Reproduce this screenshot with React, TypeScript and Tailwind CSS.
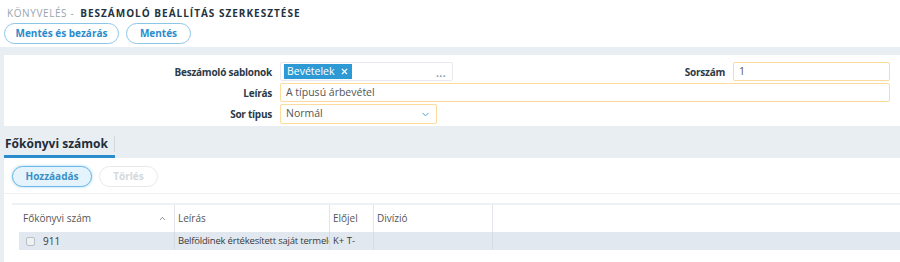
import { ChevronDown, ChevronUp, X } from "lucide-react";

const labelCls = "text-right text-[10px] font-bold tracking-[-0.25px] text-[#2b3a47] leading-none";
const inputCls = "h-[19px] border border-[#fbdc9c] bg-white rounded-[2px] px-[5px] flex items-center text-[10.5px] text-[#555]";

function Label({ children, w = "w-[268px]" }: { children: string; w?: string }) {
  return <div className={`${w} ${labelCls}`}>{children}</div>;
}

export default function App() {
  return (
    <div className="w-[900px] h-[262px] overflow-hidden bg-[#e9eef2] font-['Open_Sans',sans-serif]">
      <header className="h-[47px] bg-white px-[4px] pt-[7px]">
        <div className="flex items-center text-[10px] uppercase leading-none h-[12px]">
          <span className="text-[#9aa4ad] pl-[3px] tracking-[0.6px]">Könyvelés -</span>
          <span className="ml-[6px] font-bold text-[#24323e] tracking-[1px]">Beszámoló beállítás szerkesztése</span>
        </div>
        <div className="mt-[4px] flex gap-[7px]">
          <button className="h-[21px] w-[115px] rounded-full border border-[#8cc6e7] text-[10px] font-bold text-[#2a8ccc]">
            Mentés és bezárás
          </button>
          <button className="h-[21px] w-[65px] rounded-full border border-[#8cc6e7] text-[10px] font-bold text-[#2a8ccc]">
            Mentés
          </button>
        </div>
      </header>

      <section className="ml-[4px] mt-[8px] h-[71px] bg-white pt-[7px] pr-[10px] flex flex-col gap-[2px]">
        <div className="flex items-center h-[19px]">
          <Label>Beszámoló sablonok</Label>
          <div className="ml-[8px] w-[173px] h-[19px] border border-[#e6eaee] rounded-[2px] flex items-center px-[3px] relative">
            <span className="h-[15px] bg-[#2d9ad6] text-white text-[10.5px] flex items-center px-[3px] gap-[5px] leading-none">
              Bevételek
              <X size={9} strokeWidth={3} />
            </span>
            <span className="absolute right-[6px] bottom-[2px] text-[10px] font-bold text-[#8a97a3] leading-none tracking-[0.5px]">...</span>
          </div>
          <div className="flex-1" />
          <Label w="">Sorszám</Label>
          <div className={`${inputCls} ml-[8px] w-[157px]`}>1</div>
        </div>
        <div className="flex items-center h-[19px]">
          <Label>Leírás</Label>
          <div className={`${inputCls} ml-[8px] flex-1`}>A típusú árbevétel</div>
        </div>
        <div className="flex items-center h-[20px]">
          <Label>Sor típus</Label>
          <div className={`${inputCls} h-[20px] ml-[8px] w-[157px] justify-between`}>
            Normál
            <ChevronDown size={11} className="text-[#3d9ad6]" />
          </div>
        </div>
      </section>

      <div className="ml-[4px] mt-[6px] h-[26px] flex items-end">
        <div className="relative h-[26px] w-[111px] border-b-[3px] border-[#2a8ccc] flex items-center pl-[1px]">
          <span className="text-[12px] font-bold text-[#1e2d3a] leading-none">Főkönyvi számok</span>
          <span className="absolute right-0 top-[4px] h-[16px] w-px bg-[#d3dae0]" />
        </div>
      </div>

      <section className="ml-[4px] h-[110px] bg-white pt-[8px]">
        <div className="pl-[8px] flex gap-[7px] pb-[6px] border-b border-[#eef1f4]">
          <button className="h-[21px] w-[80px] rounded-full border border-[#6ab8e6] bg-[#e4f3fc] shadow-[0_0_3px_#9fd3f2] text-[10px] font-bold text-[#3a8fc7]">
            Hozzáadás
          </button>
          <button className="h-[21px] w-[59px] rounded-full border border-[#e6e9ec] text-[10px] font-bold text-[#d3d8dc]">
            Törlés
          </button>
        </div>
        <div className="ml-[8px] mt-[9px] border-t-[2px] border-[#edf1f4] pl-[7px]">
          <div className="flex h-[27px] text-[10px] text-[#555]">
            <div className="w-[156px] flex items-center justify-between pl-[4px] pr-[7px] border-r border-[#e2e6ea]">
              Főkönyvi szám
              <ChevronUp size={9} className="text-[#666]" />
            </div>
            <div className="w-[155px] flex items-center pl-[3px] border-r border-[#e2e6ea]">Leírás</div>
            <div className="w-[44px] flex items-center pl-[3px] border-r border-[#e2e6ea]">Előjel</div>
            <div className="w-[119px] flex items-center pl-[3px] border-r border-[#e2e6ea]">Divízió</div>
            <div className="flex-1" />
          </div>
          <div className="flex h-[18px] bg-[#e1e8f0] text-[9.5px] text-[#3a3a3a]">
            <div className="w-[156px] flex items-center pl-[7px] gap-[8px] border-r border-[#d5dce3]">
              <span className="w-[9px] h-[9px] rounded-[2px] border border-[#b9bfc5] bg-[#eef0f2]" />
              <span className="text-[10px]">911</span>
            </div>
            <div className="w-[155px] pl-[3px] border-r border-[#d5dce3] overflow-hidden whitespace-nowrap leading-[18px] tracking-[-0.2px]">
              Belföldinek értékesített saját termelé
            </div>
            <div className="w-[44px] flex items-center pl-[3px] border-r border-[#d5dce3]">K+ T-</div>
            <div className="w-[119px] border-r border-[#d5dce3]" />
            <div className="flex-1" />
          </div>
        </div>
      </section>
    </div>
  );
}
